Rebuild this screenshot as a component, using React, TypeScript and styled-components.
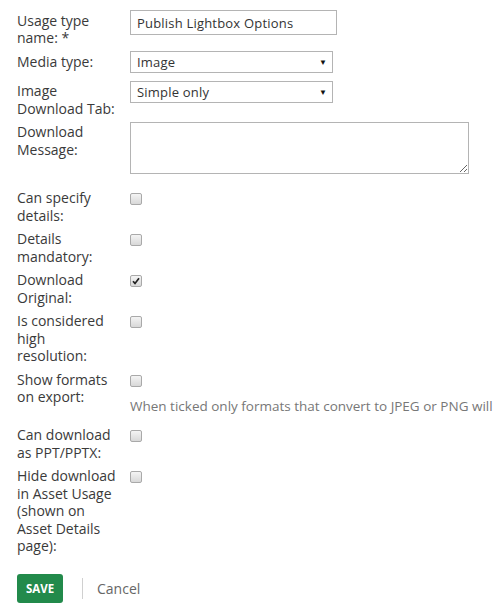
import * as React from "react";
import styled, { createGlobalStyle } from "styled-components";

const GlobalStyle = createGlobalStyle`
    html, body {
        margin: 0;
        padding: 0;
        background: #fff;
        overflow: hidden;
    }
    body {
        font-family: "Open Sans", "Liberation Sans", sans-serif;
        font-size: 14px;
        color: #333;
    }
`;

const Form = styled.form`
    padding: 10px 0 0 17px;
    width: 483px;
`;

const Row = styled.div`
    display: grid;
    grid-template-columns: 113px 1fr;
    margin-bottom: 4.5px;
`;

const Label = styled.label`
    display: block;
    width: 100px;
    padding-top: 1.5px;
    line-height: 17.5px;
    color: #3a3a3a;
`;

const Field = styled.div`
    min-height: 25px;
    min-width: 0;
`;

const TextInput = styled.input`
    display: block;
    box-sizing: border-box;
    width: 207px;
    height: 25px;
    border: 1px solid #b4b4b4;
    padding: 0 6px;
    font-family: inherit;
    font-size: 13px;
    letter-spacing: 0.2px;
    color: #333;
    outline: none;
`;

const SelectWrap = styled.div<{ w: number }>`
    position: relative;
    width: ${props => props.w}px;
    height: 22px;
`;

const Select = styled.select`
    display: block;
    box-sizing: border-box;
    width: 100%;
    height: 22px;
    border: 1px solid #b4b4b4;
    border-radius: 0;
    padding: 0 6px;
    font-family: inherit;
    font-size: 13px;
    letter-spacing: 0.2px;
    color: #333;
    background: #fff;
    appearance: none;
    outline: none;
`;

const Arrow = styled.span`
    position: absolute;
    right: 6px;
    top: 50%;
    transform: translateY(-50%);
    font-size: 8px;
    color: #111;
    pointer-events: none;
    line-height: 1;
`;

const TextArea = styled.textarea`
    display: block;
    box-sizing: border-box;
    width: 339px;
    height: 52px;
    border: 1px solid #b4b4b4;
    font-family: inherit;
    font-size: 13px;
    padding: 4px 6px;
    margin-bottom: 9.5px;
    outline: none;
`;

const Box = styled.span`
    display: block;
    box-sizing: border-box;
    width: 12px;
    height: 12px;
    margin-top: 5.5px;
    border: 1px solid #a9a9a9;
    border-radius: 2px;
    background: linear-gradient(#f4f4f4, #d8d8d8);
    position: relative;
    svg {
        position: absolute;
        left: 1px;
        top: 1px;
    }
`;

const Help = styled.div`
    margin-top: 11px;
    margin-bottom: 5px;
    font-size: 13.5px;
    line-height: 17.5px;
    white-space: nowrap;
    color: #777;
`;

const Actions = styled.div`
    display: flex;
    align-items: center;
    margin-top: 19.5px;
`;

const SaveButton = styled.button`
    width: 46px;
    height: 29px;
    border: none;
    border-radius: 3px;
    background: #228a4b;
    color: #fff;
    font-family: "Open Sans", "Liberation Sans", sans-serif;
    font-weight: 700;
    font-size: 11.5px;
    padding: 0;
`;

const Divider = styled.span`
    width: 1px;
    height: 21px;
    background: #d0d0d0;
    margin: 0 14px 0 19px;
`;

const CancelLink = styled.a`
    color: #666;
    font-size: 14px;
    text-decoration: none;
`;

const CheckBox = ({ checked }: { checked: boolean }) => (
    <Box>
        {checked && (
            <svg width="8" height="8" viewBox="0 0 8 8">
                <path d="M1 4.2 L3 6.4 L7 1.2" fill="none" stroke="#222" strokeWidth="1.7" />
            </svg>
        )}
    </Box>
);

const checks: { label: string; checked: boolean; help?: string }[] = [
    { label: "Can specify details:", checked: false },
    { label: "Details mandatory:", checked: false },
    { label: "Download Original:", checked: true },
    { label: "Is considered high resolution:", checked: false },
    {
        label: "Show formats on export:",
        checked: false,
        help: "When ticked only formats that convert to JPEG or PNG will",
    },
    { label: "Can download as PPT/PPTX:", checked: false },
    { label: "Hide download in Asset Usage (shown on Asset Details page):", checked: false },
];

export default function App() {
    return (
        <>
            <GlobalStyle />
            <Form onSubmit={e => e.preventDefault()}>
                <Row>
                    <Label>Usage type name: *</Label>
                    <Field>
                        <TextInput defaultValue="Publish Lightbox Options" />
                    </Field>
                </Row>
                <Row>
                    <Label>Media type:</Label>
                    <Field>
                        <SelectWrap w={203}>
                            <Select defaultValue="Image">
                                <option>Image</option>
                                <option>Video</option>
                                <option>Audio</option>
                            </Select>
                            <Arrow>▼</Arrow>
                        </SelectWrap>
                    </Field>
                </Row>
                <Row>
                    <Label>Image Download Tab:</Label>
                    <Field>
                        <SelectWrap w={203}>
                            <Select defaultValue="Simple only">
                                <option>Simple only</option>
                                <option>Advanced only</option>
                                <option>Both</option>
                            </Select>
                            <Arrow>▼</Arrow>
                        </SelectWrap>
                    </Field>
                </Row>
                <Row>
                    <Label>Download Message:</Label>
                    <Field>
                        <TextArea />
                    </Field>
                </Row>
                {checks.map(c => (
                    <Row key={c.label}>
                        <Label>{c.label}</Label>
                        <Field>
                            <CheckBox checked={c.checked} />
                            {c.help && <Help>{c.help}</Help>}
                        </Field>
                    </Row>
                ))}
                <Actions>
                    <SaveButton type="submit">SAVE</SaveButton>
                    <Divider />
                    <CancelLink href="#">Cancel</CancelLink>
                </Actions>
            </Form>
        </>
    );
}
